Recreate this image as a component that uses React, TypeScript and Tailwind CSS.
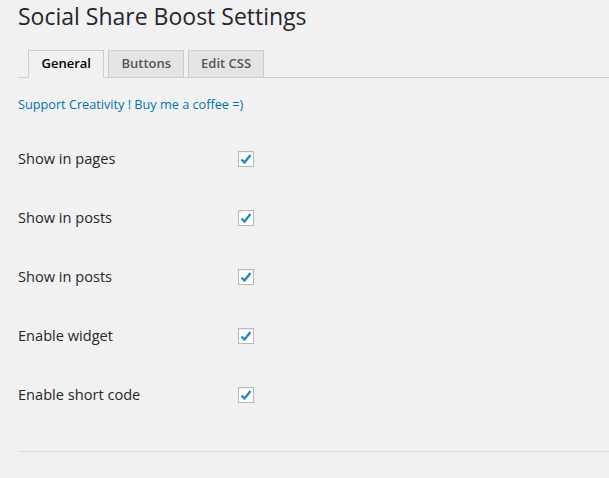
import React from 'react';

const rows = ['Show in pages', 'Show in posts', 'Show in posts', 'Enable widget', 'Enable short code'];

function Check() {
  return (
    <span className="flex h-4 w-4 items-center justify-center border border-[#b4b9be] bg-white shadow-[inset_0_1px_2px_rgba(0,0,0,0.07)]">
      <svg width="12" height="12" viewBox="0 0 12 12">
        <path d="M1.5 6.5 L4.5 9.5 L10.5 2" fill="none" stroke="#1e8cbe" strokeWidth="2.4" strokeLinejoin="miter" />
      </svg>
    </span>
  );
}

export default function App() {
  return (
    <div className="min-h-[478px] bg-[#f1f1f1] pl-[18px] text-[#23282d]" style={{ fontFamily: '"Open Sans", sans-serif' }}>
      <h1 className="pt-[2px] text-[23px] leading-[29px] font-normal">Social Share Boost Settings</h1>

      <div className="mt-[19px] flex gap-1 border-b border-[#ccc] pl-[10px]">
        <span className="-mb-px flex h-[28px] items-center border border-[#ccc] border-b-[#f1f1f1] bg-[#f1f1f1] px-[12.5px] text-[13px] font-semibold text-black">General</span>
        <span className="-mb-px flex h-[28px] items-center border border-[#ccc] bg-[#e4e4e4] px-[12px] text-[13px] font-semibold text-[#555]">Buttons</span>
        <span className="-mb-px flex h-[28px] items-center border border-[#ccc] bg-[#e4e4e4] px-[12px] text-[13px] font-semibold text-[#555]">Edit CSS</span>
      </div>

      <a className="mt-[17px] block text-[12.7px] leading-[18px] text-[#0073aa]">Support Creativity ! Buy me a coffee =)</a>

      <div className="mt-[16px]">
        {rows.map((r, i) => (
          <div key={i} className="flex h-[59px] items-center">
            <span className="w-[220px] text-[14.6px]">{r}</span>
            <Check />
          </div>
        ))}
      </div>

      <div className="mt-[27px] border-t border-[#ddd]" />
    </div>
  );
}
